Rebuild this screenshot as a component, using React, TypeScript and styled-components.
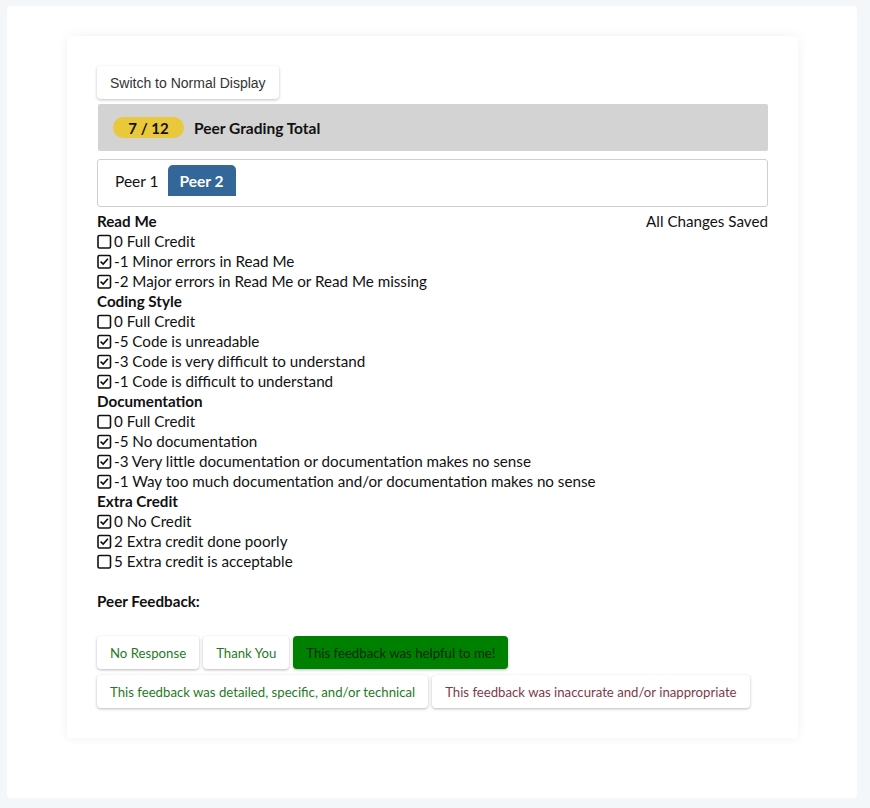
import React from 'react'
import styled, { createGlobalStyle } from 'styled-components'

type Criterion = {
  title: string
  options: { label: string; checked: boolean }[]
}

type Tone = 'green' | 'red' | 'active'

const GlobalStyle = createGlobalStyle`
  html, body {
    margin: 0;
    padding: 0;
    background: #f3f7fa;
  }
  body {
    font-family: Lato, 'Noto Sans', sans-serif;
    color: #111;
  }
`

const Page = styled.div`
  padding: 6px 13px 10px 7px;
`

const OuterPanel = styled.div`
  background: #fff;
  border-radius: 4px;
  padding: 30px 59px 59px 60px;
  min-height: 703px;
`

const Card = styled.div`
  background: #fff;
  border-radius: 4px;
  box-shadow: 0 0 12px rgba(0, 0, 0, 0.06);
  padding: 30px;
`

const SwitchButton = styled.button`
  font-family: 'Liberation Sans', Arial, sans-serif;
  font-size: 14px;
  color: #333;
  background: #fff;
  border: none;
  border-radius: 4px;
  box-shadow: 0 1px 3px rgba(0, 0, 0, 0.25);
  height: 33px;
  padding: 0 13px;
  cursor: pointer;
`

const TotalBar = styled.div`
  display: flex;
  align-items: center;
  gap: 10px;
  background: #d3d3d3;
  margin: 5px 0 0 1px;
  height: 47px;
  padding: 0 15px;
  border-radius: 2px;
`

const Badge = styled.span`
  display: inline-flex;
  align-items: center;
  justify-content: center;
  width: 71px;
  height: 21px;
  border-radius: 11px;
  background: #e9c83c;
  font-weight: 700;
  font-size: 15px;
`

const TotalLabel = styled.span`
  font-weight: 700;
  font-size: 15.5px;
`

const TabBox = styled.div`
  display: flex;
  align-items: flex-end;
  margin-top: 8px;
  border: 1px solid #cfcfcf;
  border-radius: 3px;
  height: 48px;
  padding: 0 0 10px 4px;
  box-sizing: border-box;
`

const Tab = styled.div<{ $active?: boolean }>`
  display: flex;
  align-items: center;
  height: 31px;
  padding: ${p => (p.$active ? '0 12px' : '0 9px 0 13px')};
  font-size: 15.5px;
  font-weight: ${p => (p.$active ? 700 : 400)};
  color: ${p => (p.$active ? '#fff' : '#111')};
  background: ${p => (p.$active ? '#336699' : 'transparent')};
  border-radius: 5px 5px 0 0;
`

const RubricHead = styled.div`
  display: flex;
  justify-content: space-between;
`

const Rubric = styled.div`
  margin-top: 4px;
  font-size: 15.2px;
  line-height: 20px;
`

const SectionTitle = styled.div`
  font-weight: 700;
`

const Saved = styled.div`
  font-weight: 400;
`

const OptionRow = styled.div`
  display: flex;
  align-items: center;
  gap: 2px;
`

const FeedbackTitle = styled.div`
  margin-top: 20px;
  font-weight: 700;
  font-size: 15.2px;
  line-height: 20px;
`

const FeedbackGroup = styled.div`
  display: flex;
  flex-wrap: wrap;
  gap: 6px 4px;
  margin-top: 25px;
`

const FeedbackButton = styled.button<{ $tone: Tone }>`
  font-family: Lato, 'Noto Sans', sans-serif;
  font-size: 13.2px;
  height: 33px;
  padding: 0 13px;
  border: none;
  border-radius: 4px;
  box-shadow: 0 1px 3px rgba(0, 0, 0, 0.28);
  background: ${p => (p.$tone === 'active' ? '#008000' : '#fff')};
  color: ${p => (p.$tone === 'active' ? '#0d2a0d' : p.$tone === 'red' ? '#7e3a4a' : '#1f7a1f')};
  cursor: pointer;
`

const criteria: Criterion[] = [
  {
    title: 'Read Me',
    options: [
      { label: '0 Full Credit', checked: false },
      { label: '-1 Minor errors in Read Me', checked: true },
      { label: '-2 Major errors in Read Me or Read Me missing', checked: true },
    ],
  },
  {
    title: 'Coding Style',
    options: [
      { label: '0 Full Credit', checked: false },
      { label: '-5 Code is unreadable', checked: true },
      { label: '-3 Code is very difficult to understand', checked: true },
      { label: '-1 Code is difficult to understand', checked: true },
    ],
  },
  {
    title: 'Documentation',
    options: [
      { label: '0 Full Credit', checked: false },
      { label: '-5 No documentation', checked: true },
      { label: '-3 Very little documentation or documentation makes no sense', checked: true },
      { label: '-1 Way too much documentation and/or documentation makes no sense', checked: true },
    ],
  },
  {
    title: 'Extra Credit',
    options: [
      { label: '0 No Credit', checked: true },
      { label: '2 Extra credit done poorly', checked: true },
      { label: '5 Extra credit is acceptable', checked: false },
    ],
  },
]

const feedback: { label: string; tone: Tone }[] = [
  { label: 'No Response', tone: 'green' },
  { label: 'Thank You', tone: 'green' },
  { label: 'This feedback was helpful to me!', tone: 'active' },
  { label: 'This feedback was detailed, specific, and/or technical', tone: 'green' },
  { label: 'This feedback was inaccurate and/or inappropriate', tone: 'red' },
]

function CheckBox({ checked }: { checked: boolean }) {
  return (
    <svg width="15" height="15" viewBox="0 0 15 15">
      <rect x="1" y="1.5" width="12.5" height="12.5" rx="1.5" fill="none" stroke="#111" strokeWidth="1.6" />
      {checked && <path d="M3.6 7.6 L6.2 10.1 L10.9 4.8" fill="none" stroke="#111" strokeWidth="1.7" />}
    </svg>
  )
}

export default function App() {
  return (
    <>
      <GlobalStyle />
      <Page>
        <OuterPanel>
          <Card>
            <SwitchButton>Switch to Normal Display</SwitchButton>
            <TotalBar>
              <Badge>7 / 12</Badge>
              <TotalLabel>Peer Grading Total</TotalLabel>
            </TotalBar>
            <TabBox>
              <Tab>Peer 1</Tab>
              <Tab $active>Peer 2</Tab>
            </TabBox>
            <Rubric>
              {criteria.map((c, i) => (
                <div key={c.title}>
                  <RubricHead>
                    <SectionTitle>{c.title}</SectionTitle>
                    {i === 0 && <Saved>All Changes Saved</Saved>}
                  </RubricHead>
                  {c.options.map(o => (
                    <OptionRow key={o.label}>
                      <CheckBox checked={o.checked} />
                      <span>{o.label}</span>
                    </OptionRow>
                  ))}
                </div>
              ))}
            </Rubric>
            <FeedbackTitle>Peer Feedback:</FeedbackTitle>
            <FeedbackGroup>
              {feedback.map(f => (
                <FeedbackButton key={f.label} $tone={f.tone}>
                  {f.label}
                </FeedbackButton>
              ))}
            </FeedbackGroup>
          </Card>
        </OuterPanel>
      </Page>
    </>
  )
}
